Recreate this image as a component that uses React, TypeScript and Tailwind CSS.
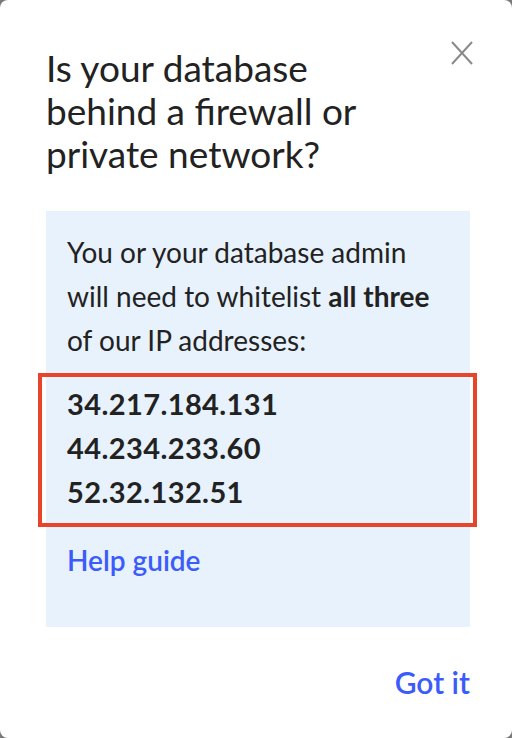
import React from "react";

export default function App() {
  return (
    <div className="w-[512px] h-[738px] bg-[#7a7a7a]" style={{ fontFamily: "Lato, 'Open Sans', sans-serif" }}>
      <div className="relative w-[512px] h-[738px] bg-white rounded-[8px] pl-[46px] pt-[46px] text-[#222222]">
        <button className="absolute left-[451px] top-[41px] w-[22px] h-[24px] flex items-center justify-center">
          <svg width="22" height="24" viewBox="0 0 22 24" fill="none" stroke="#8a8a8a" strokeWidth="2">
            <path d="M1 1 L21 23 M21 1 L1 23" />
          </svg>
        </button>
        <h1 className="text-[37px] leading-[43px] font-normal w-[340px]">
          Is your database behind a firewall or private network?
        </h1>
        <div className="mt-[36px] w-[424px] h-[416px] bg-[#e8f2fd] pl-[21px] pt-[19px]">
          <p className="text-[28px] leading-[44px]">
            You or your database admin
            <br />
            will need to whitelist <span className="font-bold">all three</span>
            <br />
            of our IP addresses:
          </p>
          <div className="relative mt-[20px] font-bold text-[29px] tracking-[0.4px] leading-[44px]">
            <div className="absolute left-[-29px] top-[-9px] w-[439px] h-[154px] border-4 border-[#e8432b]" />
            <div>34.217.184.131</div>
            <div>44.234.233.60</div>
            <div>52.32.132.51</div>
          </div>
          <a className="block mt-[24px] text-[28px] leading-[44px] font-semibold text-[#3b5bfb]">Help guide</a>
        </div>
        <div className="mt-[33px] w-[424px] flex justify-end">
          <button className="text-[30px] leading-[44px] font-semibold text-[#3b5bfb]">Got it</button>
        </div>
      </div>
    </div>
  );
}
